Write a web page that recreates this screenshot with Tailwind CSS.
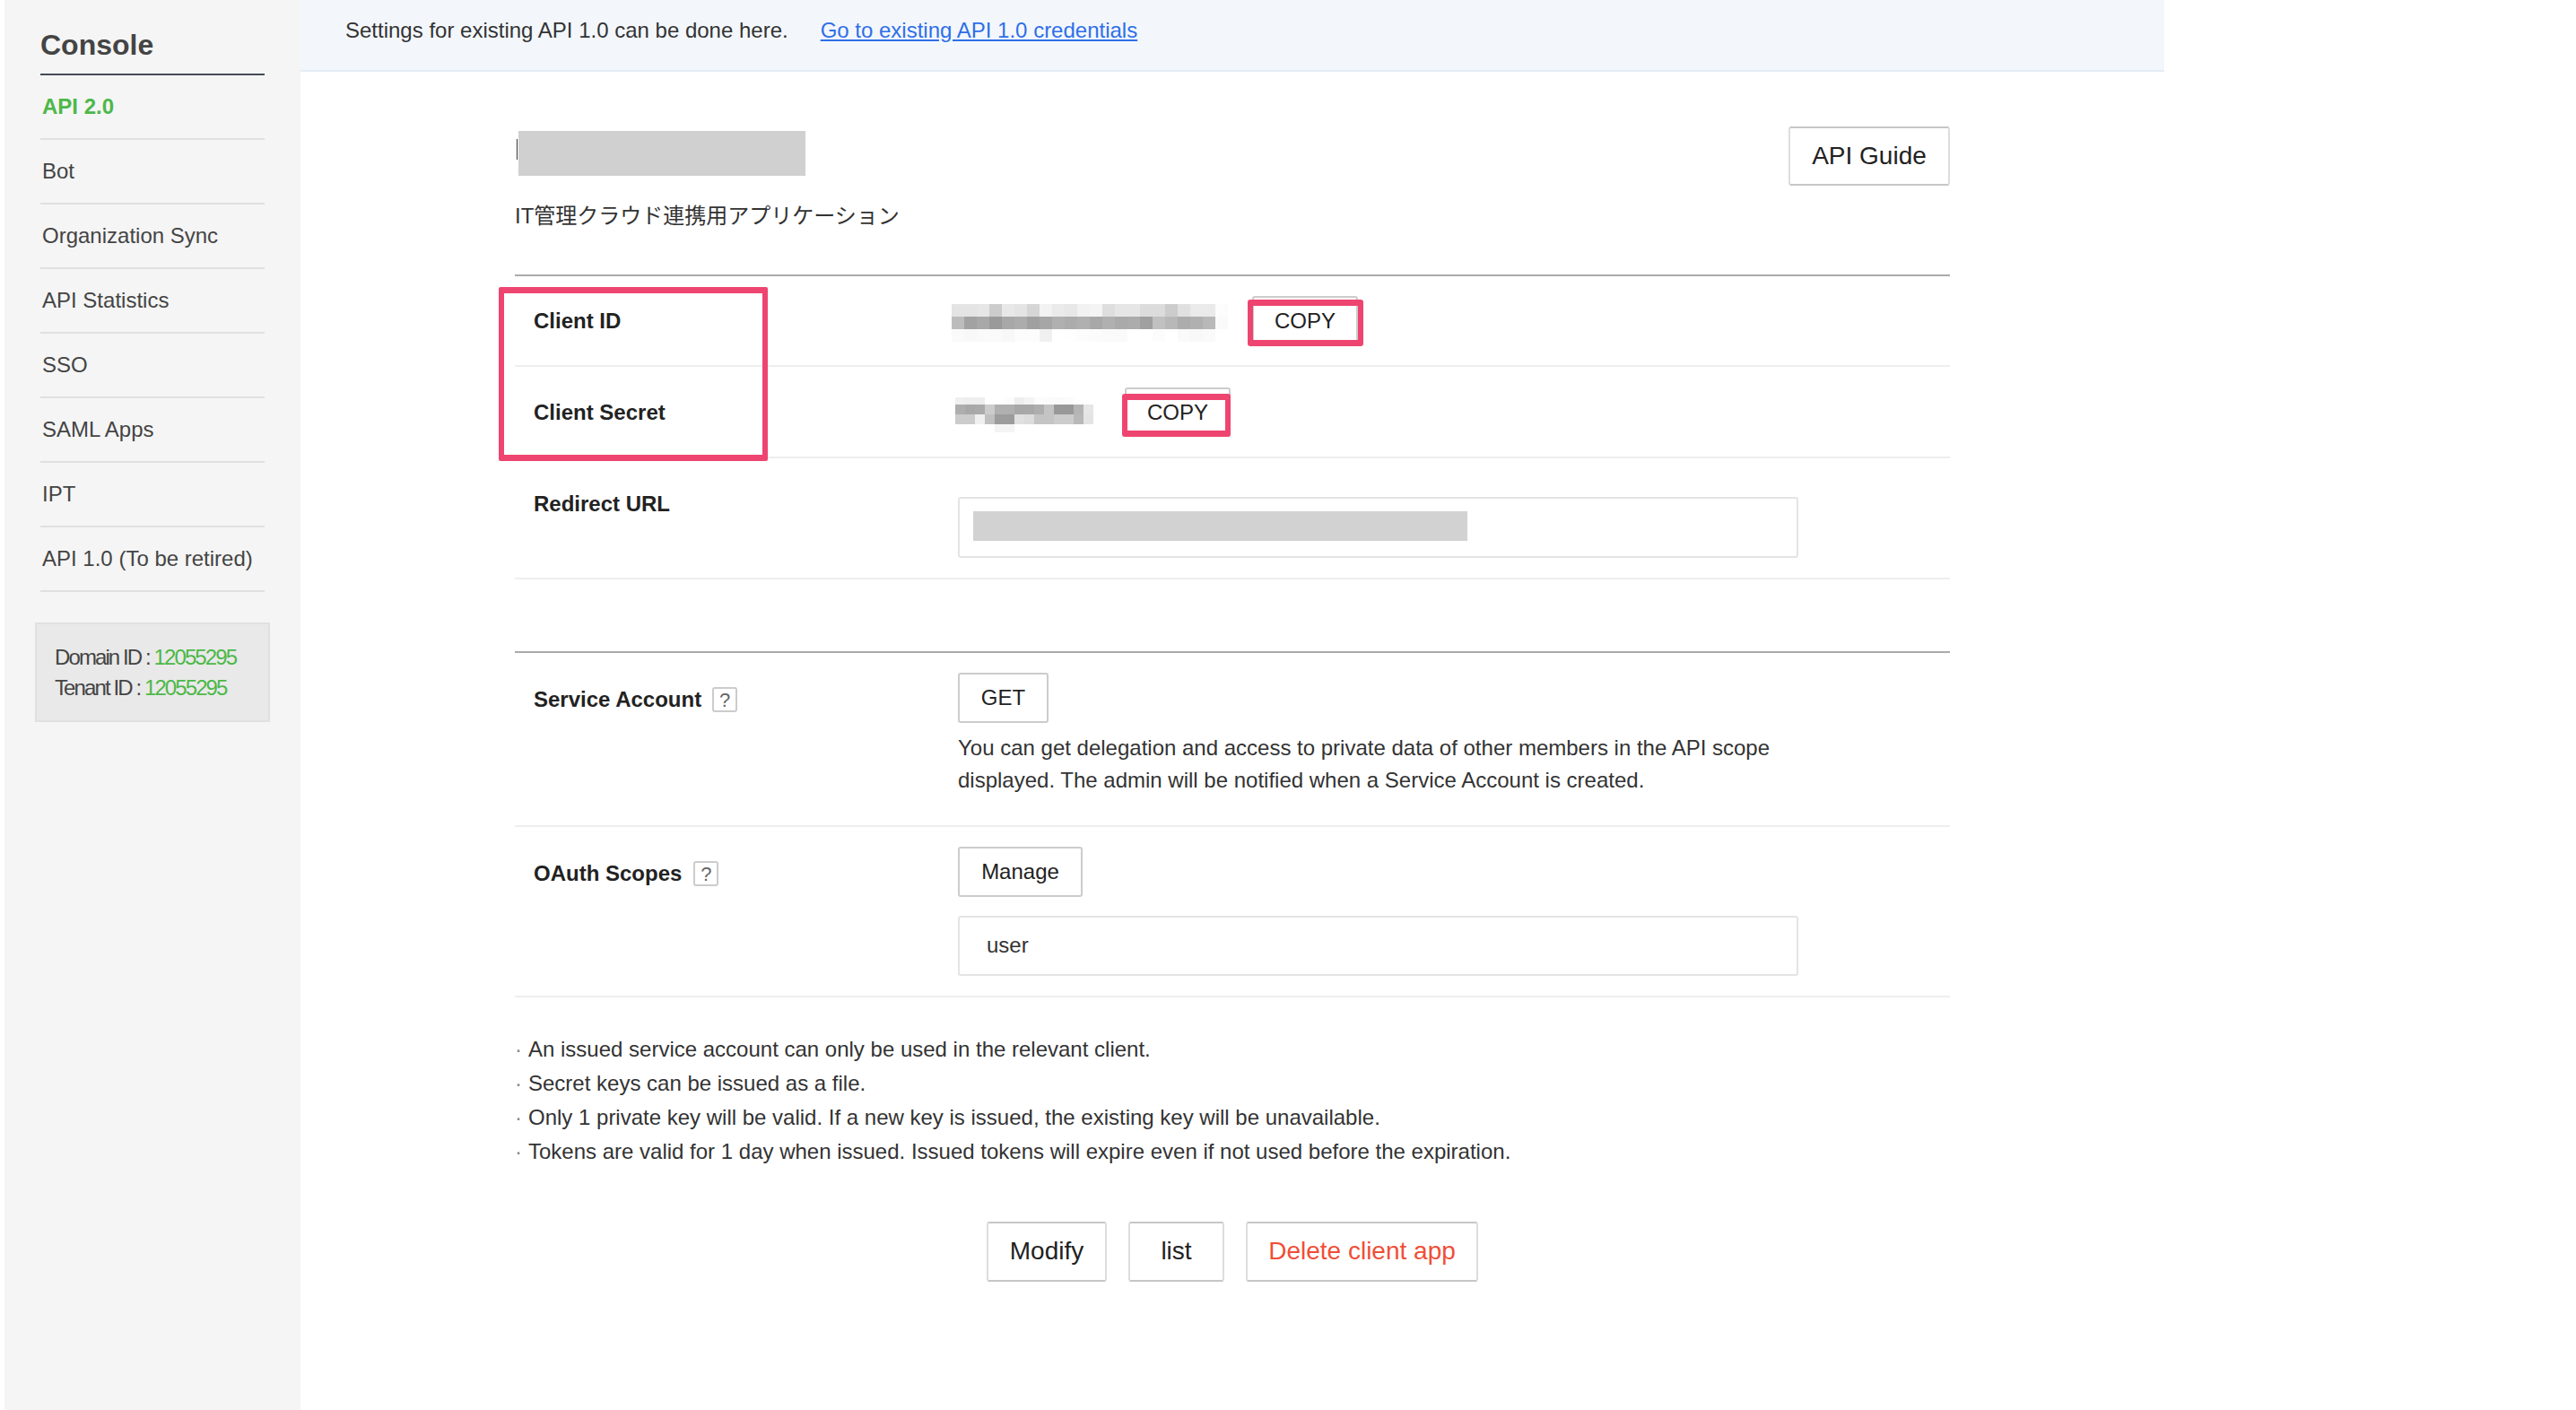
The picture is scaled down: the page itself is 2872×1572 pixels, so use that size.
<!DOCTYPE html>
<html lang="en">
<head>
    <meta charset="UTF-8">
    <title>Console</title>
    <script src="https://cdn.jsdelivr.net/npm/@tailwindcss/browser@4"></script>
</head>
<body class="bg-white">
    <div class="flex w-[2872px] h-[1572px] pl-[5px] overflow-hidden text-[24px] text-[#333] font-['Liberation_Sans','Noto_Sans_CJK_JP',sans-serif]">

        <!-- Sidebar -->
        <aside class="w-[330px] shrink-0 bg-[#f5f5f5] pl-[40px] pr-[40px]">
            <h1 class="h-[84px] pt-[30px] border-b-2 border-[#444c55] text-[32px] leading-[40px] font-bold text-[#444]">Console</h1>
            <ul class="text-[#444]">
                <li class="h-[72px] flex items-center pl-[2px] border-b-2 border-[#e0e0e0] font-bold text-[#4db848]">API 2.0</li>
                <li class="h-[72px] flex items-center pl-[2px] border-b-2 border-[#e0e0e0]">Bot</li>
                <li class="h-[72px] flex items-center pl-[2px] border-b-2 border-[#e0e0e0]">Organization Sync</li>
                <li class="h-[72px] flex items-center pl-[2px] border-b-2 border-[#e0e0e0]">API Statistics</li>
                <li class="h-[72px] flex items-center pl-[2px] border-b-2 border-[#e0e0e0]">SSO</li>
                <li class="h-[72px] flex items-center pl-[2px] border-b-2 border-[#e0e0e0]">SAML Apps</li>
                <li class="h-[72px] flex items-center pl-[2px] border-b-2 border-[#e0e0e0]">IPT</li>
                <li class="h-[72px] flex items-center pl-[2px] border-b-2 border-[#e0e0e0]">API 1.0 (To be retired)</li>
            </ul>
            <div class="mt-[34px] -mx-[6px] w-[262px] h-[111px] pt-[20px] pl-[20px] bg-[#e9e9e9] border-2 border-[#e0e0e0] leading-[34px] tracking-[-1.9px] text-[#444]">
                <p>Domain ID : <span class="text-[#4db848]">12055295</span></p>
                <p>Tenant ID : <span class="text-[#4db848]">12055295</span></p>
            </div>
        </aside>

        <!-- Main -->
        <main class="w-[2078px] shrink-0">
            <div class="h-[80px] pb-[10px] flex items-center pl-[50px] bg-[#f3f7fc] border-b-2 border-[#e4ecf5]">
                <span class="text-[#333]">Settings for existing API 1.0 can be done here.</span>
                <a href="#" class="ml-[36px] text-[#2f6fe8] underline">Go to existing API 1.0 credentials</a>
            </div>

            <div class="relative w-[1600px] mx-auto">
                <!-- Title -->
                <div class="relative h-[228px] border-b-2 border-[#aaa]">
                    <div class="absolute left-[2px] top-[75px] w-px h-[23px] bg-[#333]"></div>
                    <div class="absolute left-[4px] top-[66px] w-[320px] h-[50px] bg-[#d0d0d0]"></div>
                    <button class="absolute right-0 top-[61px] w-[180px] h-[66px] bg-white border-2 border-[#ddd] border-t-[#c6c6c6] border-b-[#c6c6c6] rounded-[3px] text-[28px] text-[#222]">API Guide</button>
                    <p class="absolute left-0 top-[143px] leading-[36px]">IT管理クラウド連携用アプリケーション</p>
                </div>

                <!-- Client ID -->
                <div class="flex h-[101px] border-b-2 border-[#eee]">
                    <div class="w-[495px] pl-[21px] pt-[32px] leading-[36px] font-bold text-[#222]">Client ID</div>
                    <div class="flex items-start">
                        <svg id="blurId" class="-ml-[8px] mt-[31px]" width="308" height="42"></svg>
                        <button class="ml-[27px] mt-[22px] w-[118px] h-[54px] pt-[1px] bg-white border-2 border-[#ccc] rounded-[3px] text-[#222]">COPY</button>
                    </div>
                </div>

                <!-- Client Secret -->
                <div class="flex h-[102px] border-b-2 border-[#eee]">
                    <div class="w-[495px] pl-[21px] pt-[33px] leading-[36px] font-bold text-[#222]">Client Secret</div>
                    <div class="flex items-start">
                        <svg id="blurSecret" class="-ml-[4px] mt-[34px]" width="154" height="39"></svg>
                        <button class="ml-[35px] mt-[23px] w-[118px] h-[55px] bg-white border-2 border-[#ccc] rounded-[3px] text-[#222]">COPY</button>
                    </div>
                </div>

                <!-- Redirect URL -->
                <div class="flex h-[135px] border-b-2 border-[#eee]">
                    <div class="w-[494px] pl-[21px] pt-[33px] leading-[36px] font-bold text-[#222]">Redirect URL</div>
                    <div class="w-[937px] h-[68px] mt-[43px] p-[14px] bg-white border-2 border-[#e4e4e4] rounded-[3px]">
                        <div class="ml-[1px] w-[551px] h-[33px] bg-[#d2d2d2]"></div>
                    </div>
                </div>

                <!-- Service Account -->
                <div class="mt-[80px] flex h-[196px] border-t-2 border-b-2 border-t-[#aaa] border-b-[#eee]">
                    <div class="w-[494px] pl-[21px] pt-[34px] flex items-start font-bold text-[#222]">
                        <span class="leading-[36px]">Service Account</span>
                        <span class="ml-[12px] mt-[4px] w-[28px] h-[28px] flex items-center justify-center border-2 border-[#ccc] rounded-[3px] text-[22px] font-normal text-[#666]">?</span>
                    </div>
                    <div class="pt-[22px]">
                        <button class="w-[101px] h-[56px] bg-white border-2 border-[#ccc] rounded-[3px] text-[#222]">GET</button>
                        <p class="mt-[10px] leading-[36px]">You can get delegation and access to private data of other members in the API scope<br>displayed. The admin will be notified when a Service Account is created.</p>
                    </div>
                </div>

                <!-- OAuth Scopes -->
                <div class="flex h-[190px] border-b-2 border-[#eee]">
                    <div class="w-[494px] pl-[21px] pt-[34px] flex items-start font-bold text-[#222]">
                        <span class="leading-[36px]">OAuth Scopes</span>
                        <span class="ml-[13px] mt-[4px] w-[28px] h-[28px] flex items-center justify-center border-2 border-[#ccc] rounded-[3px] text-[22px] font-normal text-[#666]">?</span>
                    </div>
                    <div class="pt-[22px]">
                        <button class="w-[139px] h-[56px] bg-white border-2 border-[#ccc] rounded-[3px] text-[#222]">Manage</button>
                        <div class="mt-[21px] w-[937px] h-[67px] flex items-center pl-[30px] pb-[1px] border-2 border-[#e4e4e4] rounded-[3px]">user</div>
                    </div>
                </div>

                <!-- Notes -->
                <ul class="mt-[39px] leading-[38px]">
                    <li class="flex"><span class="w-[15px] text-[#888]">·</span>An issued service account can only be used in the relevant client.</li>
                    <li class="flex"><span class="w-[15px] text-[#888]">·</span>Secret keys can be issued as a file.</li>
                    <li class="flex"><span class="w-[15px] text-[#888]">·</span>Only 1 private key will be valid. If a new key is issued, the existing key will be unavailable.</li>
                    <li class="flex"><span class="w-[15px] text-[#888]">·</span>Tokens are valid for 1 day when issued. Issued tokens will expire even if not used before the expiration.</li>
                </ul>

                <!-- Actions -->
                <div class="mt-[59px] pl-[526px] flex gap-[24px] text-[28px]">
                    <button class="w-[134px] h-[67px] pb-[2px] bg-white border-2 border-[#ddd] border-t-[#c6c6c6] border-b-[#c6c6c6] rounded-[3px] text-[#222]">Modify</button>
                    <button class="w-[107px] h-[67px] pb-[2px] bg-white border-2 border-[#ddd] border-t-[#c6c6c6] border-b-[#c6c6c6] rounded-[3px] text-[#222]">list</button>
                    <button class="w-[259px] h-[67px] pb-[2px] bg-white border-2 border-[#ddd] border-t-[#c6c6c6] border-b-[#c6c6c6] rounded-[3px] text-[#f04e37]">Delete client app</button>
                </div>

                <!-- Pink annotations over the screenshot -->
                <div class="absolute left-[-18px] top-[240px] w-[300px] h-[194px] border-x-[6px] border-y-[7px] border-[#ee4570] rounded-[2px]"></div>
                <div class="absolute left-[817px] top-[254px] w-[129px] h-[52px] border-x-[6px] border-y-[7px] border-[#ee4570] rounded-[3px]"></div>
                <div class="absolute left-[677px] top-[359px] w-[121px] h-[48px] border-x-[6px] border-y-[7px] border-[#ee4570] rounded-[3px]"></div>
            </div>
        </main>
    </div>

    <script>
        // pixelated (masked) credentials, grey value per cell
        function drawBlur(id, rows, cellW, rowH) {
            const svg = document.getElementById(id);
            let html = '';
            let y = 0;
            rows.forEach((row, r) => {
                row.forEach((v, c) => {
                    html += `<rect x="${c * cellW}" y="${y}" width="${cellW}" height="${rowH[r]}" fill="#${v}${v}${v}"/>`;
                });
                y += rowH[r];
            });
            svg.innerHTML = html;
        }

        drawBlur('blurId', [
            ['e4','e4','e6','cc','e8','e4','d6','f2','ea','e8','f2','f4','de','e6','e6','dc','dc','cc','e0','ea','ea','fc'],
            ['bc','a2','a8','9a','a8','ac','a0','a6','b0','ac','b0','a8','b0','aa','ac','a0','c0','b8','ac','b0','b8','fa'],
            ['fa','f8','fa','fa','f8','fc','fc','f0','ff','fe','fc','fb','fa','fa','ff','ff','fc','ff','fa','f8','fa','ff']
        ], 14, [14, 14, 14]);

        drawBlur('blurSecret', [
            ['f0','ee','ee','ff','ff','fc','ee','f4','fc','fb','fa','fb','fe','ff'],
            ['ae','a8','aa','cc','b0','b0','a8','a8','ae','c4','98','98','b4','e6'],
            ['cc','cc','f0','c0','9c','9c','e0','dc','c4','c4','cc','cc','b8','e4'],
            ['ff','ff','ff','ff','f4','f4','ff','ff','ff','ff','ff','ff','ff','ff']
        ], 11, [8, 11, 11, 9]);
    </script>
</body>
</html>
